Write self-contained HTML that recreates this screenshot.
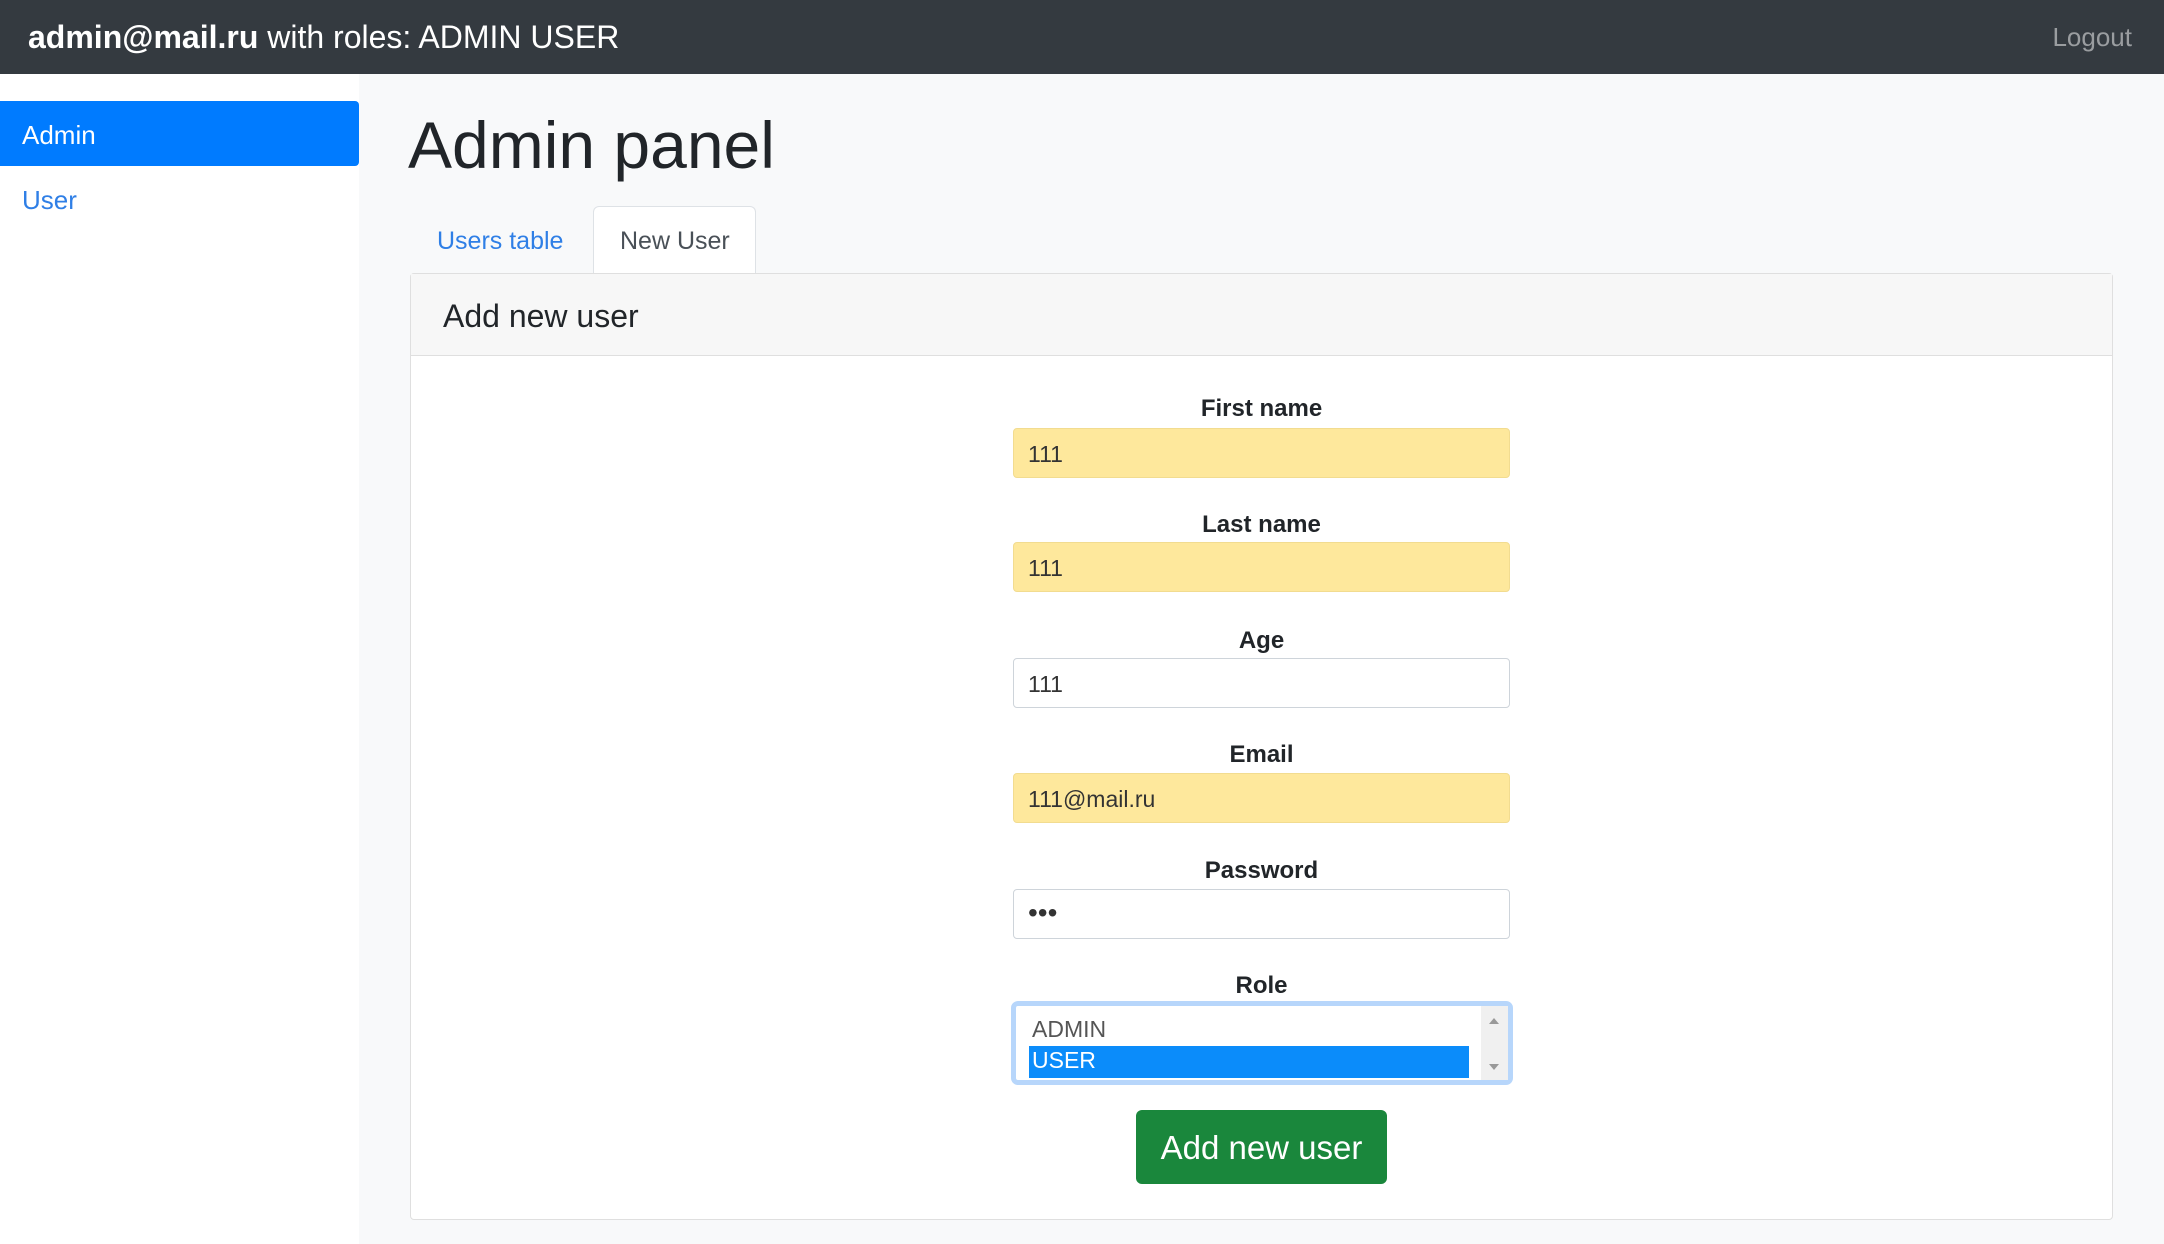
<!DOCTYPE html>
<html><head><style>
*{box-sizing:border-box;margin:0;padding:0}
body{width:2164px;height:1244px;overflow:hidden;font-family:"Liberation Sans",sans-serif;background:#f8f9fa;position:relative;color:#212529}
.nav{position:absolute;left:0;top:0;width:2164px;height:74px;background:#343a40;color:#fff}
.nav .t{position:absolute;left:28px;top:19px;font-size:32px}
.nav .lo{position:absolute;right:32px;top:22px;font-size:26px;color:#9a9da0}
.side{position:absolute;left:0;top:74px;width:359px;height:1170px;background:#fff}
.act{position:absolute;left:0;top:27px;width:359px;height:65px;background:#007bff;border-radius:0 4px 4px 0;color:#fff;font-size:26px;padding:19px 22px}
.usr{position:absolute;left:22px;top:111px;font-size:26px;color:#2f7fe6}
h1{position:absolute;left:408px;top:107px;font-size:66px;font-weight:400}
.tab1{position:absolute;left:437px;top:227px;font-size:25px;color:#2f7fe6}
.tab2{position:absolute;left:593px;top:206px;width:163px;height:68px;background:#fff;border:1px solid #dee2e6;border-bottom:none;border-radius:6px 6px 0 0;font-size:25px;color:#495057;padding:20px 0 0 26px}
.card{position:absolute;left:410px;top:273px;width:1703px;height:947px;background:#fff;border:1px solid #dfdfdf;border-radius:4px}
.ch{height:82px;background:#f7f7f7;border-bottom:1px solid #dfdfdf;font-size:32px;padding:24px 32px}
.lab{position:absolute;left:1013px;width:497px;text-align:center;font-weight:bold;font-size:24px}
.in{position:absolute;left:1013px;width:497px;height:50px;border:1px solid #ced4da;border-radius:4px;background:#fff;font-size:23px;padding:12px 14px;color:#333}
.y{background:#fee89c;border-color:#f2dc90}
.sel{position:absolute;left:1011px;top:1001px;width:502px;height:84px;border:5px solid #b7d6fb;border-radius:7px;background:#fff}
.sel .o1{position:absolute;left:16px;top:10px;font-size:23px;color:#555}
.sel .o2{position:absolute;left:13px;top:40px;width:440px;height:32px;background:#0b8cfa;color:#fff;font-size:23px;padding:1px 3px}
.sb{position:absolute;right:0;top:0;width:27px;height:74px;background:#f0f0f0}
.btn{position:absolute;left:1136px;top:1110px;width:251px;height:74px;background:#1a873c;border-radius:6px;color:#fff;font-size:33px;text-align:center;line-height:76px}
</style></head><body>
<div class="nav"><div class="t"><b>admin@mail.ru</b> with roles: ADMIN USER</div><div class="lo">Logout</div></div>
<div class="side"><div class="act">Admin</div><div class="usr">User</div></div>
<h1>Admin panel</h1>
<div class="tab1">Users table</div>
<div class="tab2">New User</div>
<div class="card"><div class="ch">Add new user</div></div>
<div class="lab" style="top:395px">First name</div>
<div class="in y" style="top:428px">111</div>
<div class="lab" style="top:511px">Last name</div>
<div class="in y" style="top:542px">111</div>
<div class="lab" style="top:627px">Age</div>
<div class="in" style="top:658px">111</div>
<div class="lab" style="top:741px">Email</div>
<div class="in y" style="top:773px">111@mail.ru</div>
<div class="lab" style="top:857px">Password</div>
<div class="in" style="top:889px;font-size:28px;padding-top:7px">•••</div>
<div class="lab" style="top:972px">Role</div>
<div class="sel"><div class="o1">ADMIN</div><div class="o2">USER</div><div class="sb"><div style="position:absolute;left:8px;top:12px;border:5px solid transparent;border-bottom:6px solid #999;border-top:none"></div><div style="position:absolute;left:8px;top:58px;border:5px solid transparent;border-top:6px solid #999;border-bottom:none"></div></div></div>
<div class="btn">Add new user</div>
</body></html>
